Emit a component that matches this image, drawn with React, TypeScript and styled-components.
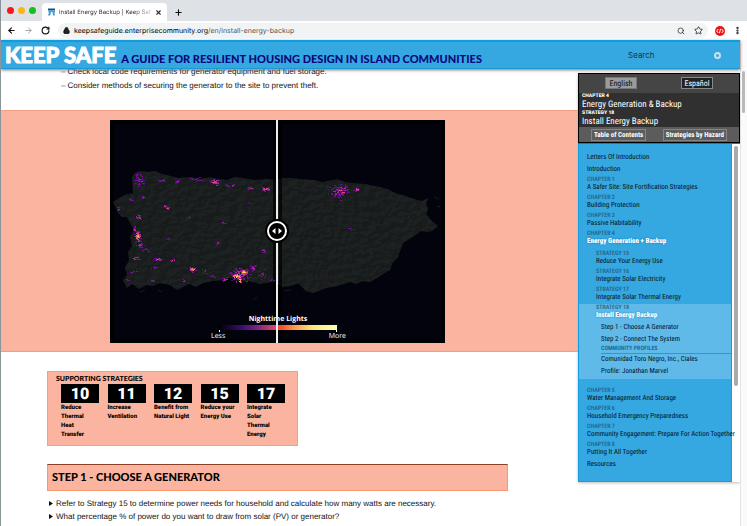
import React from "react";
import styled, { createGlobalStyle } from "styled-components";
import { ArrowLeft, ArrowRight, RotateCw, Lock, Search, Star, EllipsisVertical, X, Plus } from "lucide-react";

const BLUE = "#35a7e1";
const PEACH = "#fab49f";
const SIDE_FONT = `"Liberation Sans Narrow", "Roboto Condensed", Roboto, sans-serif`;
const DISPLAY = `Lato, sans-serif`;
const BODY = `"Liberation Sans", Arial, sans-serif`;

const Global = createGlobalStyle`
  *, *::before, *::after { box-sizing: border-box; }
  html, body { margin: 0; height: 100%; overflow: hidden; }
  #root { height: 100%; }
  body { background: #fff; color: #111; font-family: ${BODY}; text-rendering: geometricPrecision; }
  button { font: inherit; color: inherit; border: 0; padding: 0; background: none; cursor: pointer; text-rendering: inherit; }
  a { color: inherit; text-decoration: none; }
  h1, h2, h3, p, ul { margin: 0; padding: 0; }
`;

const Window = styled.div`
  height: 100vh;
  display: flex;
  flex-direction: column;
  overflow: hidden;
  border-left: 1px solid #8b9496;
`;

const TabStrip = styled.div`
  flex: none;
  display: flex;
  align-items: flex-end;
  height: 21px;
  background: #dee1e6;
`;

const Lights = styled.div`
  display: flex;
  gap: 4px;
  align-self: center;
  padding: 0 6px;
`;

const Light = styled.span<{ $color: string }>`
  width: 7px;
  height: 7px;
  border-radius: 50%;
  background: ${(p) => p.$color};
`;

const Tab = styled.div`
  display: flex;
  align-items: center;
  gap: 4px;
  height: 18px;
  width: 125px;
  padding: 0 5px 0 6px;
  border-radius: 4px 4px 0 0;
  background: #fff;
  font: 6px Inter, sans-serif;
  color: #333;
`;

const TabTitle = styled.span`
  flex: 1;
  white-space: nowrap;
  mask-image: linear-gradient(90deg, #000 80%, rgba(0, 0, 0, 0.2));
`;

const IconButton = styled.button`
  display: flex;
  align-items: center;
  justify-content: center;
`;

const NewTab = styled(IconButton)`
  margin: 0 0 4px 7px;
`;

const Toolbar = styled.div`
  flex: none;
  display: flex;
  align-items: center;
  gap: 8px;
  height: 19px;
  padding: 0 5px 0 6px;
  background: #fff;
`;

const AddressBar = styled.div`
  flex: 1;
  display: flex;
  align-items: center;
  gap: 4px;
  height: 15px;
  margin-right: -1px;
  padding: 0 5px;
  border-radius: 8px;
  background: #f1f3f4;
`;

const Url = styled.span`
  flex: 1;
  font: 7px/15px Inter, sans-serif;
  color: #555;
  b { font-weight: 400; color: #000; }
`;

const AddressActions = styled.span`
  display: flex;
  align-items: center;
  gap: 9px;
`;

const ExtensionButton = styled(IconButton)`
  width: 10px;
  height: 10px;
  border-radius: 50%;
  background: #f01010;
`;

const Viewport = styled.div`
  flex: 1;
  min-height: 0;
  display: flex;
`;

const Page = styled.div`
  flex: 1;
  min-width: 0;
  display: flex;
  flex-direction: column;
`;

const Header = styled.header`
  flex: none;
  position: relative;
  z-index: 2;
  display: flex;
  align-items: baseline;
  height: 29px;
  padding: 0 19px 0 4px;
  background: ${BLUE};
  border-top: 2px solid #0e9ddd;
  border-bottom: 1px solid #1a98d6;
  box-shadow: 0 1px 3px #7b6d6a;
`;

const Logo = styled.a`
  font: 900 22px/26px ${DISPLAY};
  color: #fff;
  white-space: nowrap;
  -webkit-text-stroke: 1px #fff;
`;

const Tagline = styled.h1`
  flex: 1;
  margin-left: 5px;
  font: 900 11px/26px ${DISPLAY};
  color: #08087a;
  white-space: nowrap;
`;

const SearchBox = styled.input`
  width: 82px;
  align-self: center;
  padding: 0;
  border: 0;
  outline: 0;
  background: transparent;
  font: 8px Inter, sans-serif;
  color: #12384c;
  &::placeholder { color: #12384c; opacity: 1; }
`;

const Ring = styled.button`
  align-self: center;
  width: 7px;
  height: 7px;
  margin-left: 4px;
  border: 2px solid #c9e2ee;
  border-radius: 50%;
`;

const Columns = styled.div`
  flex: 1;
  min-height: 0;
  display: flex;
  align-items: flex-start;
`;

const Main = styled.main`
  flex: 1;
  min-width: 0;
`;

const DashList = styled.ul`
  list-style: none;
  padding-left: 60px;
  margin-top: -4px;
  font-size: 8px;
  line-height: 14px;
  li { display: flex; gap: 2px; white-space: nowrap; }
  li::before { content: "–"; color: #555; }
`;

const MapBand = styled.section`
  display: flex;
  justify-content: center;
  margin-top: 17px;
  padding: 9px 25px 8px 0;
  background: ${PEACH};
  border: solid #f39c80;
  border-width: 1px 0;
`;

const MapFrame = styled.figure`
  position: relative;
  width: 335px;
  margin: 0;
  background: #000;
  svg { display: block; }
`;

const Divider = styled.div`
  position: absolute;
  top: 0;
  bottom: 0;
  left: 50%;
  width: 2px;
  margin-left: -1px;
  background: #eee;
`;

const Handle = styled.button`
  position: absolute;
  top: 50%;
  left: 50%;
  width: 20px;
  height: 20px;
  margin: -11px 0 0 -10px;
  border: 2px solid #fff;
  border-radius: 50%;
  background: #000;
  box-shadow: 0 0 0 2px #000;
  display: flex;
  align-items: center;
  justify-content: center;
`;

const Legend = styled.figcaption`
  position: absolute;
  left: 50%;
  bottom: 2px;
  width: 138px;
  margin-left: -68px;
  font: 7px/8px "Open Sans", sans-serif;
  color: #fff;
  text-align: center;
  strong { display: block; }
`;

const Ramp = styled.div`
  height: 5px;
  margin: 1px 10px 0;
  background: linear-gradient(90deg, #000004, #3b0f70 20%, #8c2981 35%, #de4968 48%, #f8502c 53%, #fe9f4d 65%, #fcea7d 80%, #fcfdb0);
`;

const Ends = styled.div`
  display: flex;
  justify-content: space-between;
  padding: 3px 1px 0 2px;
  background:
    linear-gradient(#fff, #fff) 10px 0 / 1px 2px no-repeat,
    linear-gradient(#fff, #fff) 127px 0 / 1px 2px no-repeat;
`;

const Strategies = styled.section`
  width: 251px;
  margin: 19px 0 0 46px;
  padding: 3px 9px 6px 8px;
  background: ${PEACH};
  border: 1px solid #f6a07f;
  h2 { font: 900 7px/8px ${DISPLAY}; color: #000; }
`;

const Cards = styled.div`
  display: flex;
  justify-content: space-between;
  padding: 1px 3px 0 5px;
`;

const Card = styled.a`
  width: 38px;
  font: 900 6px/9px Roboto, sans-serif;
  white-space: pre;
  color: #000;
`;

const CardNumber = styled.span`
  display: block;
  background: #000;
  color: #fff;
  text-align: center;
  font: 900 16px/19px Roboto, sans-serif;
`;

const StepTitle = styled.h2`
  width: 461px;
  margin: 18px 0 0 46px;
  padding-left: 4px;
  background: ${PEACH};
  border: 1px solid #f59a6c;
  border-top-color: #8c3f22;
  font: 900 11px/25px ${DISPLAY};
  color: #000;
`;

const ArrowList = styled.ul`
  list-style: none;
  margin: 6px 0 0 47px;
  font-size: 8px;
  line-height: 13px;
  li { display: flex; align-items: center; gap: 3px; white-space: nowrap; }
`;

const Side = styled.aside`
  flex: none;
  width: 162px;
  margin-top: 4px;
  background: #fff;
  font-family: ${SIDE_FONT};
  box-shadow: 0 1px 3px #bbb;
`;

const SideTop = styled.div`
  background: #303030;
  border: 1px solid #000;
  color: #fff;
`;

const Languages = styled.div`
  display: flex;
  justify-content: space-between;
  padding: 3px 26px 4px;
  background: #454545;
`;

const Chip = styled.button<{ $active?: boolean }>`
  width: 32px;
  height: 12px;
  border: 1px solid ${(p) => (p.$active ? "#777" : "#888")};
  background: ${(p) => (p.$active ? "#9b9b9b" : "#222")};
  color: ${(p) => (p.$active ? "#111" : "#fff")};
  font-size: 8px;
  line-height: 9px;
`;

const Crumbs = styled.div`
  padding: 0 3px;
`;

const CrumbLabel = styled.div`
  font: 900 5px/7px Roboto, sans-serif;
`;

const CrumbTitle = styled.div`
  font-size: 9px;
  line-height: 11px;
  margin-bottom: -1px;
`;

const Modes = styled.div`
  display: flex;
  justify-content: space-between;
  padding: 2px 12px 1px 12px;
  background: #5c5c5c;
`;

const Mode = styled.button`
  height: 12px;
  padding: 0 2px;
  border: 1px solid #858585;
  font-size: 7px;
  line-height: 9px;
  font-weight: 700;
`;

const NavWrap = styled.div`
  display: flex;
  border-top: 1px solid #8a5a2c;
`;

const Nav = styled.nav`
  flex: 1;
  min-width: 0;
  padding: 8px 0 10px;
  background: ${BLUE};
  border: 1px solid #119de0;
  border-top: 0;
  font-size: 7px;
  white-space: nowrap;
`;

const Thumb = styled.div<{ $height: number }>`
  width: 4px;
  height: ${(p) => p.$height}px;
  margin: 2px 2px 0;
  border-radius: 2px;
  background: #aaa;
`;

const Entry = styled.a<{ $indent: number; $current?: boolean }>`
  display: block;
  padding: 1px 0 3px ${(p) => p.$indent}px;
  color: ${(p) => (p.$current ? "#fff" : "#03141f")};
  font-weight: ${(p) => (p.$current ? 900 : 400)};
  text-shadow: ${(p) => (p.$current ? "0 0 2px #007fc4" : "none")};
  span { display: block; line-height: 8px; }
  small { display: block; font: 500 6px/6px ${SIDE_FONT}; color: #1c6287; text-shadow: none; }
`;

const Group = styled.div`
  padding-top: 2px;
`;

const Highlight = styled.div`
  margin-bottom: 8px;
  padding-bottom: 1px;
  background: #60bae9;
`;

const Community = styled.div`
  margin-left: 22px;
  padding-bottom: 1px;
  border-bottom: 1px solid #3a94c2;
  font: 700 6px/6px ${SIDE_FONT};
  color: #1c6d98;
`;

const PageScroll = styled.div`
  flex: none;
  width: 7px;
  padding: 31px 2px 0 1px;
  background: #fafafa;
  border-left: 1px solid #e4e4e4;
`;

const PageThumb = styled.div`
  height: 42px;
  border-radius: 2px;
  background: #b9b9b9;
`;

const ISLAND =
  "M22 57L25 53 30 51 38 52 45 51 52 54 57 55 68 58 80 57 90 59 100 57 109 59 117 60 125 57 133 58 145 60 157 59 166 60 173 58 181 58 190 59 203 60 213 62 218 61 227 59 235 62 243 63 255 64 270 67 278 69 285 73 296 76 307 80 312 81 318 78 316 84 318 89 316 94 322 101 328 106 322 111 317 112 311 111 303 117 298 120 293 123 290 131 288 137 282 144 280 150 273 154 267 158 260 162 253 161 246 164 240 162 234 164 227 166 216 168 203 173 196 171 188 163 181 166 173 167 162 162 150 164 139 161 130 162 120 158 113 160 103 161 93 163 86 167 79 164 67 170 60 165 50 163 43 166 37 165 29 169 22 164 17 168 13 160 17 155 15 148 19 140 18 132 22 126 20 117 24 110 20 103 17 97 12 97 8 93 6 88 3 82 14 75 23 73Z";

type Cluster = [number, number, number, number, number, number];

// x, y, horizontal spread, vertical spread, cell count, brightness
const CLUSTERS: Cluster[] = [
  [29, 60, 5, 8, 46, 1], [50, 60, 5, 4, 14, 1], [67, 61, 3, 2, 8, 1], [88, 59, 9, 3, 18, 1],
  [104, 62, 5, 4, 34, 3], [120, 65, 6, 3, 12, 1], [140, 68, 5, 3, 18, 1], [155, 69, 5, 2, 24, 3],
  [20, 79, 3, 2, 8, 1], [33, 77, 3, 2, 7, 1], [8, 89, 2, 3, 7, 1], [28, 97, 3, 3, 14, 2],
  [55, 86, 2, 2, 9, 2], [57, 88, 2, 2, 8, 3], [78, 97, 2, 2, 4, 1], [113, 102, 3, 2, 5, 1], [139, 83, 2, 1, 3, 0],
  [25, 109, 3, 4, 12, 2], [27, 116, 3, 6, 46, 5], [29, 124, 3, 4, 14, 2], [34, 129, 5, 2, 9, 1], [26, 138, 5, 2, 12, 2], [47, 139, 5, 2, 14, 3],
  [62, 140, 3, 2, 9, 2], [44, 147, 3, 2, 8, 1], [23, 152, 4, 3, 8, 1], [58, 119, 2, 2, 3, 0],
  [82, 149, 4, 3, 30, 4], [95, 151, 3, 3, 8, 1], [102, 156, 4, 2, 9, 1], [115, 159, 4, 3, 14, 2], [130, 154, 12, 8, 80, 2],
  [126, 156, 6, 3, 40, 6], [133, 152, 5, 3, 36, 6], [129, 160, 3, 4, 14, 5], [143, 148, 4, 4, 18, 2], [152, 154, 4, 7, 20, 1], [153, 131, 3, 3, 10, 1],
  [107, 123, 2, 2, 4, 1], [17, 160, 3, 1, 6, 1], [42, 160, 3, 1, 5, 1], [73, 161, 3, 2, 8, 2],
  [162, 160, 2, 2, 4, 1],
  [228, 72, 12, 10, 86, 1], [231, 70, 8, 7, 26, 3], [246, 69, 4, 2, 18, 3], [241, 109, 5, 2, 6, 0], [219, 163, 1, 1, 2, 0],
];

const HEAT = ["#4b0b76", "#6d118b", "#a42695", "#d84878", "#f97b45", "#ffb44b", "#ffe176"];

function createRandom(seed: number) {
  let s = seed;
  return () => {
    s = (s * 1664525 + 1013904223) % 4294967296;
    return s / 4294967296;
  };
}

function NightMap() {
  const random = createRandom(17);
  const cells: React.ReactNode[] = [];
  CLUSTERS.forEach(([cx, cy, sx, sy, count, heat], k) => {
    for (let i = 0; i < count; i++) {
      const dx = random() + random() - 1;
      const dy = random() + random() - 1;
      const near = 1 - Math.min(1, Math.hypot(dx, dy));
      const level = Math.min(6, Math.round(heat * near + random()));
      cells.push(
        <rect key={`${k}-${i}`} x={Math.round(cx + dx * sx)} y={Math.round(cy + dy * sy)} width={random() > 0.4 ? 2 : 1} height="1" fill={HEAT[level]} />
      );
    }
  });
  return (
    <svg width="100%" viewBox="0 0 335 223" role="img" aria-label="Night lights across the island">
      <defs>
        <filter id="terrain" x="0" y="0" width="100%" height="100%">
          <feTurbulence type="fractalNoise" baseFrequency="0.13 0.19" numOctaves="5" seed="9" result="n" />
          <feDiffuseLighting in="n" surfaceScale="1" lightingColor="#1d2421" result="l">
            <feDistantLight azimuth="230" elevation="60" />
          </feDiffuseLighting>
          <feComposite in="l" in2="SourceGraphic" operator="in" />
        </filter>
      </defs>
      <rect width="335" height="223" fill="#000" />
      <rect x="4" y="4" width="159" height="215" fill="#03030d" />
      <rect x="172" y="4" width="159" height="215" fill="#03030d" />
      <path d={ISLAND} fill="#171c1b" filter="url(#terrain)" />
      <path d="M30 172l5-2M48 170l4 2M143 180l4-3M174 171l7-1M324 77l5 2M327 86l3 1" stroke="#171d22" fill="none" />
      <path d="M163 50h3v130h-3zM169 50h3v130h-3z" fill="#000" opacity=".7" />
      {cells}
    </svg>
  );
}

function Favicon() {
  return (
    <svg width="8" height="8" viewBox="0 0 8 8">
      <path d="M0 0h8v2H0z" fill="#174a7c" />
      <path d="M0 2h8v2L7.500 5 8 8H6L5 4H3.500L2.500 8H0l1-3z" fill="#459bd0" />
    </svg>
  );
}

const STRATEGIES = [
  ["10", "Reduce\nThermal\nHeat\nTransfer"],
  ["11", "Increase\nVentilation"],
  ["12", "Benefit from\nNatural Light"],
  ["15", "Reduce your\nEnergy Use"],
  ["17", "Integrate\nSolar\nThermal\nEnergy"],
];

type ItemProps = { label?: string; indent?: number; current?: boolean; children: React.ReactNode };

function Item({ label, indent = 8, current, children }: ItemProps) {
  return (
    <Entry href="#" $indent={indent} $current={current}>
      {label && <small>{label}</small>}
      <span>{children}</span>
    </Entry>
  );
}

function Triangle() {
  return (
    <svg width="5" height="5" viewBox="0 0 5 5" aria-hidden="true">
      <path d="M1 0L5 2.5 1 5z" fill="#111" />
    </svg>
  );
}

export default function App() {
  return (
    <Window>
      <Global />
      <TabStrip>
        <Lights>
          <Light $color="#f5191d" />
          <Light $color="#fdb515" />
          <Light $color="#0fc31c" />
        </Lights>
        <Tab>
          <Favicon />
          <TabTitle>Install Energy Backup | Keep Saf</TabTitle>
          <IconButton aria-label="Close tab"><X size={7} strokeWidth={4} /></IconButton>
        </Tab>
        <NewTab aria-label="New tab"><Plus size={9} strokeWidth={3} /></NewTab>
      </TabStrip>
      <Toolbar>
        <IconButton aria-label="Back"><ArrowLeft size={9} strokeWidth={3} /></IconButton>
        <IconButton aria-label="Forward"><ArrowRight size={9} color="#888" /></IconButton>
        <IconButton aria-label="Reload"><RotateCw size={9} strokeWidth={3} /></IconButton>
        <AddressBar>
          <Lock size={7} fill="#222" strokeWidth={3} />
          <Url><b>keepsafeguide.enterprisecommunity.org</b>/en/install-energy-backup</Url>
          <AddressActions>
            <Search size={8} />
            <Star size={9} />
          </AddressActions>
        </AddressBar>
        <ExtensionButton aria-label="Extension">
          <svg width="8" height="6" viewBox="0 0 8 6" fill="none" stroke="#fff">
            <path d="M2.3 1L.7 3l1.6 2M5.7 1l1.6 2-1.6 2M4.6.8L3.4 5.2" />
          </svg>
        </ExtensionButton>
        <IconButton aria-label="Menu"><EllipsisVertical size={9} strokeWidth={4} /></IconButton>
      </Toolbar>
      <Viewport>
        <Page>
          <Header>
            <Logo href="#">KEEP SAFE</Logo>
            <Tagline>A GUIDE FOR RESILIENT HOUSING DESIGN IN ISLAND COMMUNITIES</Tagline>
            <SearchBox type="search" aria-label="Search" placeholder="Search" />
            <Ring aria-label="Submit search" />
          </Header>
          <Columns>
            <Main>
              <DashList>
                <li>Check local code requirements for generator equipment and fuel storage.</li>
                <li>Consider methods of securing the generator to the site to prevent theft.</li>
              </DashList>
              <MapBand>
                <MapFrame>
                  <NightMap />
                  <Legend>
                    <strong>Nighttime Lights</strong>
                    <Ramp />
                    <Ends><span>Less</span><span>More</span></Ends>
                  </Legend>
                  <Divider />
                  <Handle aria-label="Compare before and after">
                    <svg width="12" height="6" viewBox="0 0 12 6" fill="#fff">
                      <path d="M4.5 0v6L1 3zM7.500 0v6L11 3z" />
                    </svg>
                  </Handle>
                </MapFrame>
              </MapBand>
              <Strategies>
                <h2>SUPPORTING STRATEGIES</h2>
                <Cards>
                  {STRATEGIES.map(([n, text]) => (
                    <Card href="#" key={n}>
                      <CardNumber>{n}</CardNumber>
                      {text}
                    </Card>
                  ))}
                </Cards>
              </Strategies>
              <StepTitle>STEP 1 - CHOOSE A GENERATOR</StepTitle>
              <ArrowList>
                <li><Triangle />Refer to Strategy 15 to determine power needs for household and calculate how many watts are necessary.</li>
                <li><Triangle />What percentage % of power do you want to draw from solar (PV) or generator?</li>
              </ArrowList>
            </Main>
            <Side>
              <SideTop>
                <Languages>
                  <Chip $active>English</Chip>
                  <Chip>Español</Chip>
                </Languages>
                <Crumbs>
                  <CrumbLabel>CHAPTER 4</CrumbLabel>
                  <CrumbTitle>Energy Generation &amp; Backup</CrumbTitle>
                  <CrumbLabel>STRATEGY 18</CrumbLabel>
                  <CrumbTitle>Install Energy Backup</CrumbTitle>
                </Crumbs>
                <Modes>
                  <Mode>Table of Contents</Mode>
                  <Mode>Strategies by Hazard</Mode>
                </Modes>
              </SideTop>
              <NavWrap>
                <Nav>
                  <Item>Letters Of Introduction</Item>
                  <Item>Introduction</Item>
                  <Item label="CHAPTER 1">A Safer Site: Site Fortification Strategies</Item>
                  <Item label="CHAPTER 2">Building Protection</Item>
                  <Item label="CHAPTER 3">Passive Habitability</Item>
                  <Item label="CHAPTER 4" current>Energy Generation + Backup</Item>
                  <Group>
                    <Item indent={17} label="STRATEGY 15">Reduce Your Energy Use</Item>
                    <Item indent={17} label="STRATEGY 16">Integrate Solar Electricity</Item>
                    <Item indent={17} label="STRATEGY 17">Integrate Solar Thermal Energy</Item>
                  </Group>
                  <Highlight>
                    <Item indent={17} label="STRATEGY 18" current>Install Energy Backup</Item>
                    <Item indent={22}>Step 1 - Choose A Generator</Item>
                    <Item indent={22}>Step 2 - Connect The System</Item>
                    <Community>COMMUNITY PROFILES</Community>
                    <Item indent={22}>Comunidad Toro Negro, Inc., Ciales</Item>
                    <Item indent={22}>Profile: Jonathan Marvel</Item>
                  </Highlight>
                  <Item label="CHAPTER 5">Water Management And Storage</Item>
                  <Item label="CHAPTER 6">Household Emergency Preparedness</Item>
                  <Item label="CHAPTER 7">Community Engagement: Prepare For Action Together</Item>
                  <Item label="CHAPTER 8">Putting It All Together</Item>
                  <Item>Resources</Item>
                </Nav>
                <Thumb $height={240} />
              </NavWrap>
            </Side>
          </Columns>
        </Page>
        <PageScroll><PageThumb /></PageScroll>
      </Viewport>
    </Window>
  );
}
